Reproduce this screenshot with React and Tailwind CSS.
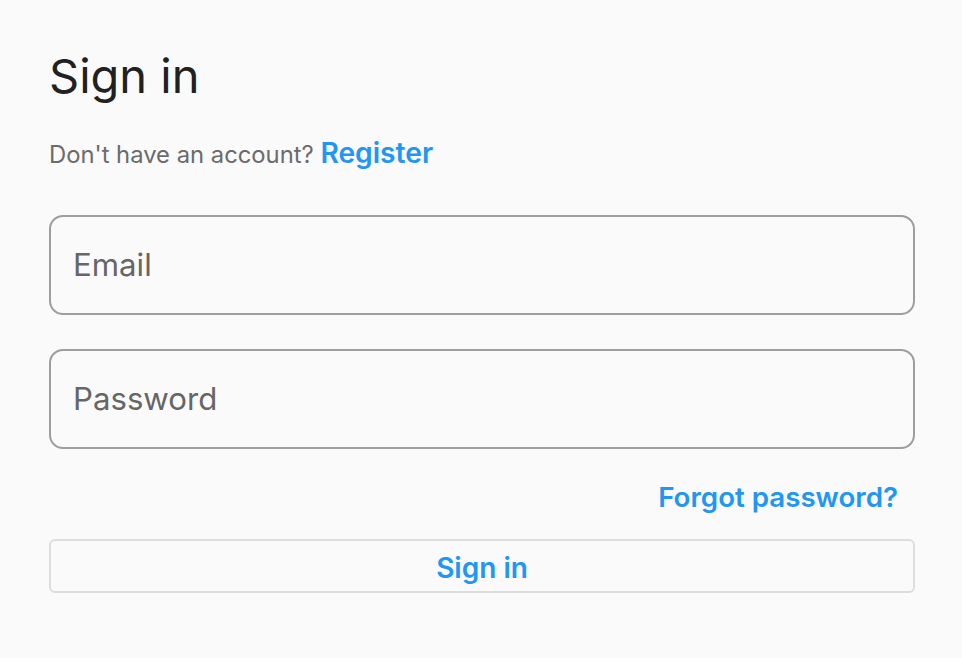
export default function App() {
  return (
    <div
      className="min-h-screen bg-[#fafafa] pl-[49px] pr-[47px] pt-[48px]"
      style={{ fontFamily: 'Inter, "Noto Sans", sans-serif' }}
    >
      <h1 className="text-[47px] leading-[56px] text-[#212121] font-normal">Sign in</h1>

      <p className="mt-[32px] text-[23.8px] leading-[34px] text-[#6b6b6b]">
        Don't have an account?{' '}
        <a href="#" className="text-[28.2px] font-semibold text-[#2196f3]">Register</a>
      </p>

      <form className="mt-[43px] flex flex-col" onSubmit={(e) => e.preventDefault()}>
        <input
          type="email"
          placeholder="Email"
          className="h-[100px] w-full rounded-[14px] border-2 border-[#9e9e9e] bg-transparent px-[22px] text-[31.2px] text-[#212121] placeholder:text-[#666] outline-none"
        />
        <input
          type="password"
          placeholder="Password"
          className="mt-[34px] h-[100px] w-full rounded-[14px] border-2 border-[#9e9e9e] bg-transparent px-[22px] text-[31.2px] text-[#212121] placeholder:text-[#666] outline-none"
        />

        <div className="mt-[28px] flex justify-end pr-[17px]">
          <a href="#" className="text-[27.7px] leading-[40px] font-semibold text-[#2196f3]">Forgot password?</a>
        </div>

        <button
          type="submit"
          className="mt-[22px] h-[54px] w-full rounded-[6px] border-2 border-[#dddddd] bg-transparent pt-1 text-[28px] font-semibold text-[#2196f3]"
        >
          Sign in
        </button>
      </form>
    </div>
  );
}
